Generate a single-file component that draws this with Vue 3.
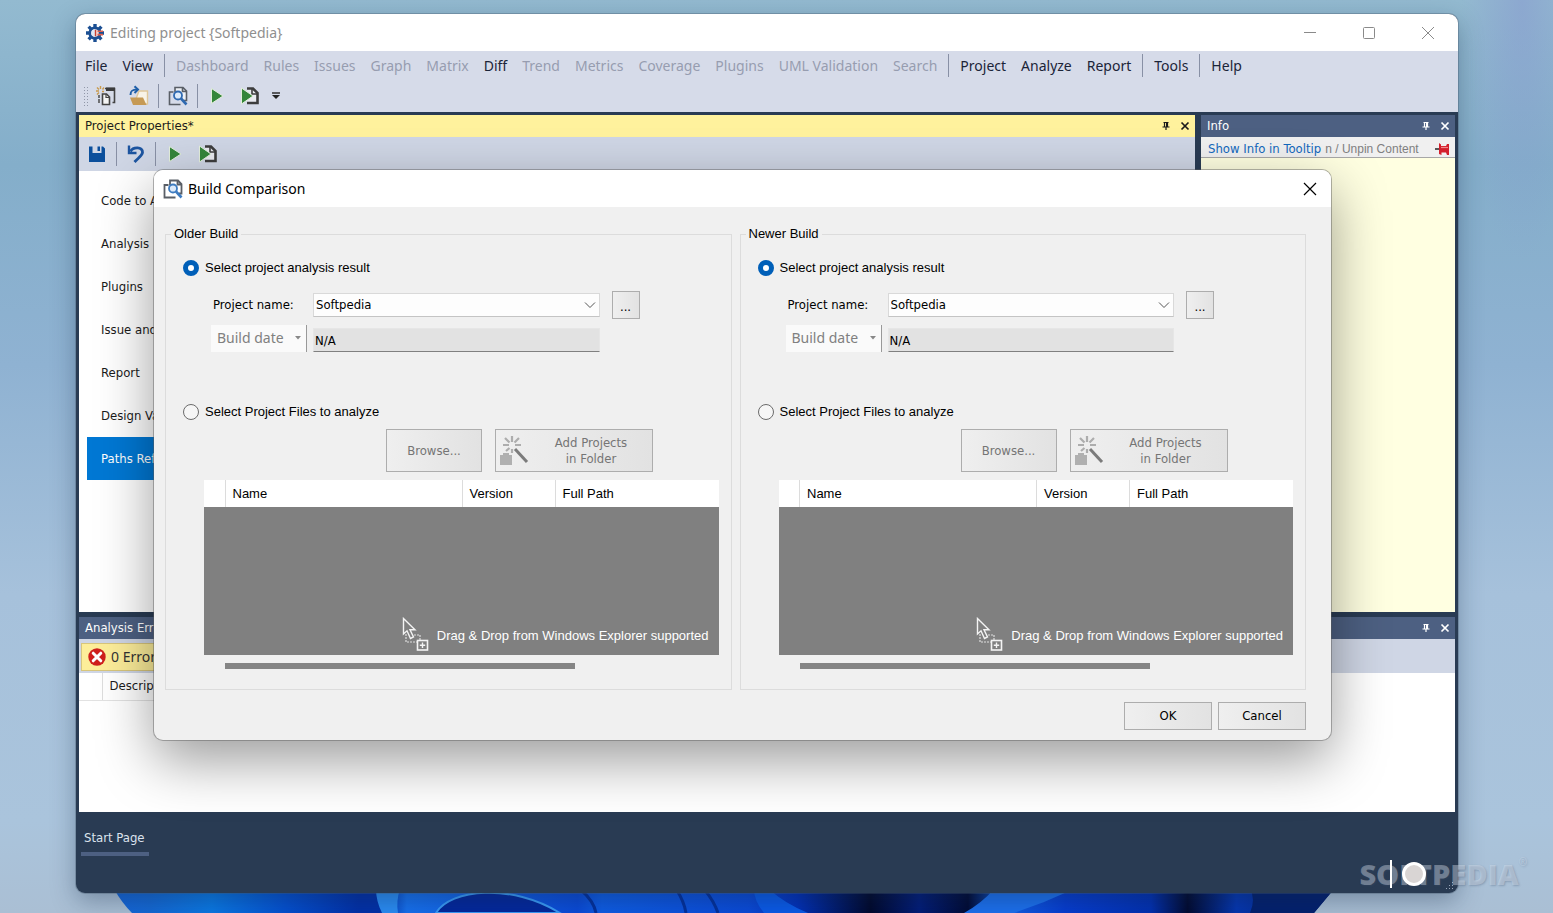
<script setup>
import { ref } from 'vue'

const menuGroups = [
  [{ t: 'File', on: true }, { t: 'View', on: true }],
  [
    { t: 'Dashboard' }, { t: 'Rules' }, { t: 'Issues' }, { t: 'Graph' }, { t: 'Matrix' },
    { t: 'Diff', on: true }, { t: 'Trend' }, { t: 'Metrics' }, { t: 'Coverage' },
    { t: 'Plugins' }, { t: 'UML Validation' }, { t: 'Search' }
  ],
  [{ t: 'Project', on: true }, { t: 'Analyze', on: true }, { t: 'Report', on: true }],
  [{ t: 'Tools', on: true }],
  [{ t: 'Help', on: true }]
]

const sections = ['Code to Analyze', 'Analysis', 'Plugins', 'Issue and Debt', 'Report', 'Design Validation', 'Paths Referenced']
const current = ref('Paths Referenced')

const builds = ref([
  { id: 'older', title: 'Older Build', source: 'result', project: 'Softpedia', date: 'N/A' },
  { id: 'newer', title: 'Newer Build', source: 'result', project: 'Softpedia', date: 'N/A' }
])
</script>

<template>
  <div class="desktop">
    <svg class="bloom" viewBox="0 0 1240 24" preserveAspectRatio="none" aria-hidden="true">
      <defs>
        <linearGradient id="bloomFill" x1="0" x2="1" y1="0" y2="0">
          <stop offset="0" stop-color="#1565d8" />
          <stop offset=".03" stop-color="#1468d4" />
          <stop offset=".08" stop-color="#0a78e4" />
          <stop offset=".14" stop-color="#0450d0" />
          <stop offset=".2" stop-color="#0230a8" />
          <stop offset=".22" stop-color="#0230a8" />
          <stop offset=".24" stop-color="#1670ee" />
          <stop offset=".38" stop-color="#0a4ad8" />
          <stop offset=".4" stop-color="#0e5ce4" />
          <stop offset=".52" stop-color="#0a4ad8" />
          <stop offset=".56" stop-color="#0230b8" />
          <stop offset=".62" stop-color="#01082c" />
          <stop offset=".66" stop-color="#021c78" />
          <stop offset=".7" stop-color="#010a34" />
          <stop offset=".73" stop-color="#1260e4" />
          <stop offset=".78" stop-color="#063cd0" />
          <stop offset=".85" stop-color="#0230b0" />
          <stop offset=".88" stop-color="#020a30" />
          <stop offset=".92" stop-color="#0536b0" />
          <stop offset="1" stop-color="#03206e" />
        </linearGradient>
      </defs>
      <path d="M0 0H1220Q1210 12 1200 24H18Q8 14 0 0Z" fill="url(#bloomFill)" />
      <path d="M262 0H286Q282 12 284 24H268Q262 12 262 0Z" fill="#2a8cf4" />
      <path d="M322 24C336 0 398 -6 446 24Z" fill="#03279c" stroke="#3a9cf8" stroke-width="2" />
      <path d="M466 0Q480 12 482 24M562 0Q570 12 572 24M590 0Q600 12 604 24" fill="none" stroke="#03309c" stroke-width="3" />
      <path d="M655 0Q670 14 694 24H650Q640 12 640 0Z" fill="#0a5ae8" />
      <path d="M880 0H960Q930 14 900 24H850Q868 14 880 0Z" fill="#1c70ee" />
      <path d="M1136 0H1220Q1210 12 1200 24H1136Q1142 10 1136 0Z" fill="#03206e" />
    </svg>

    <main class="window">
      <header class="titlebar">
        <svg class="app-icon" viewBox="0 0 20 20" aria-hidden="true">
          <g stroke="#1b4f93" stroke-width="3.4">
            <path d="M10 1V19M1 10H19M3.6 3.6L16.4 16.4M16.4 3.6L3.6 16.4" />
          </g>
          <circle cx="10" cy="10" r="6.6" fill="#1b4f93" />
          <circle cx="10" cy="10" r="3.8" fill="#f3d9d6" />
          <path d="M10 6.2A3.8 3.8 0 0 0 10 13.8Z" fill="#dfe8f4" />
          <path d="M10.5 7V13" stroke="#c8402f" stroke-width="1.4" />
          <path d="M12.5 8.2H18M12.5 11.6H18" stroke="#e0604c" stroke-width="1.6" />
        </svg>
        <h1>Editing project {Softpedia}</h1>
        <div class="caption">
          <button type="button" aria-label="Minimize"><svg viewBox="0 0 14 14"><path d="M1 6.5H13" /></svg></button>
          <button type="button" aria-label="Maximize"><svg viewBox="0 0 14 14"><rect x="1.5" y="1.5" width="11" height="11" rx="1" /></svg></button>
          <button type="button" aria-label="Close"><svg viewBox="0 0 14 14"><path d="M1 1L13 13M13 1L1 13" /></svg></button>
        </div>
      </header>

      <nav class="menubar" aria-label="Main menu">
        <div v-for="(group, g) in menuGroups" :key="g" class="menu-group">
          <button v-for="item in group" :key="item.t" type="button" :disabled="!item.on">{{ item.t }}</button>
        </div>
      </nav>

      <div class="toolbar" role="toolbar" aria-label="Project tools">
        <i class="grip"></i>
        <button type="button" aria-label="New project">
          <svg viewBox="0 0 22 22">
            <path d="M10 3.5H19.5V17.5H17.5" fill="none" stroke="#444" stroke-width="1.6" />
            <path d="M11 2.5H20V6H11Z" fill="#3c3c3c" />
            <path d="M7.5 9H11.5L14.5 12V19.5H7.5Z" fill="#f4f4f4" stroke="#444" stroke-width="1.6" />
            <path d="M11 9V12.5H14.5" fill="none" stroke="#444" stroke-width="1.2" />
            <path d="M4 18V10" stroke="#555" stroke-width="1.6" stroke-dasharray="4 1" />
            <path d="M5.5 1V4M1 6H4M2 2.5L4 4.5M9 2.5L7.5 4.5M2 9.5L4 7.5M7 6.5H9" stroke="#c99a4e" stroke-width="1.4" />
          </svg>
        </button>
        <button type="button" aria-label="Open project">
          <svg viewBox="0 0 22 22">
            <path d="M11 6H19.5V19H6Z" fill="#f8f3e8" stroke="#dfc79b" stroke-width="1.4" />
            <path d="M2 12.5H15L18.5 20H5Z" fill="#c69a55" />
            <path d="M2.5 10C2.5 5.5 4.5 4.5 9 4.5" fill="none" stroke="#1f5fa8" stroke-width="2" />
            <path d="M6.5 1.2L10 4.5L6.5 8" fill="none" stroke="#1f5fa8" stroke-width="2" />
          </svg>
        </button>
        <i class="sep"></i>
        <button type="button" aria-label="Compare builds">
          <svg viewBox="0 0 22 22">
            <path d="M8 7V2.5H16L19.5 6V15.5H17M15.5 3V6.5H19" fill="#eef1f6" stroke="#595e66" stroke-width="1.6" />
            <path d="M6.5 7H2.5V19.5H13.5" fill="none" stroke="#595e66" stroke-width="1.6" />
            <circle cx="11" cy="10.5" r="4" fill="#dceafa" stroke="#2f69b0" stroke-width="1.8" />
            <path d="M14 13.5L19.5 19.5" stroke="#2f69b0" stroke-width="2.6" />
          </svg>
        </button>
        <i class="sep"></i>
        <button type="button" aria-label="Run analysis">
          <svg viewBox="0 0 22 22"><path d="M5.5 3.5L17 11L5.5 18.5Z" fill="#35863a" stroke="#e4efdc" /></svg>
        </button>
        <button type="button" aria-label="Run analysis and build report">
          <svg viewBox="0 0 22 22">
            <path d="M8 3.5H14L18.5 8V18H8" fill="#e9eaf0" stroke="#3d3d3d" stroke-width="2.6" />
            <path d="M13 4V9H18" fill="none" stroke="#3d3d3d" stroke-width="1.6" />
            <path d="M2.5 3L14 11L2.5 19Z" fill="#35863a" stroke="#e4efdc" />
          </svg>
        </button>
        <button type="button" class="more" aria-label="Toolbar options">
          <svg viewBox="0 0 8 8"><path d="M0 1H8" stroke="#222" stroke-width="1.4" /><path d="M0 3H8L4 7Z" fill="#222" /></svg>
        </button>
      </div>

      <div class="workspace">
        <div class="docks">
          <section class="pane properties">
            <header class="pane-head active">
              <h2>Project Properties*</h2>
              <button type="button" aria-label="Pin"><svg viewBox="0 0 10 10"><path d="M2.5 1.5H7.5M3.5 1V6M6.5 1V6M1.5 6H8.5M5 6V9" stroke="currentColor" stroke-width="1.2" /><path d="M5 1H7V6H5Z" fill="currentColor" /></svg></button>
              <button type="button" aria-label="Close pane"><svg viewBox="0 0 10 10"><path d="M1.5 1.5L8.5 8.5M8.5 1.5L1.5 8.5" stroke="currentColor" stroke-width="1.7" /></svg></button>
            </header>
            <div class="pane-tools" role="toolbar" aria-label="Properties tools">
              <button type="button" aria-label="Save">
                <svg viewBox="0 0 22 22"><path d="M3 3.5H6.5V10H15.5V3.5H17L19 5.5V19H3Z" fill="#0b4f9c" /><path d="M11.5 3.5H14V8H11.5Z" fill="#0b4f9c" /></svg>
              </button>
              <i class="sep"></i>
              <button type="button" aria-label="Undo">
                <svg viewBox="0 0 22 22"><path d="M5.5 8.5C8 3.5 18 3.5 17.5 9.5C17 13 13 15 9.5 19" fill="none" stroke="#1d55a0" stroke-width="2.8" /><path d="M4 2.5V10H11.5" fill="none" stroke="#1d55a0" stroke-width="2.4" /></svg>
              </button>
              <i class="sep"></i>
              <button type="button" aria-label="Run analysis">
                <svg viewBox="0 0 22 22"><path d="M5.5 3.5L17 11L5.5 18.5Z" fill="#35863a" stroke="#e4efdc" /></svg>
              </button>
              <button type="button" aria-label="Run analysis and build report">
                <svg viewBox="0 0 22 22">
                  <path d="M8 3.5H14L18.5 8V18H8" fill="#e9eaf0" stroke="#3d3d3d" stroke-width="2.6" />
                  <path d="M13 4V9H18" fill="none" stroke="#3d3d3d" stroke-width="1.6" />
                  <path d="M2.5 3L14 11L2.5 19Z" fill="#35863a" stroke="#e4efdc" />
                </svg>
              </button>
            </div>
            <nav class="sections" aria-label="Property sections">
              <button v-for="s in sections" :key="s" type="button" :class="{ selected: s === current }" @click="current = s">{{ s }}</button>
            </nav>
          </section>

          <aside class="pane info">
            <header class="pane-head">
              <h2>Info</h2>
              <button type="button" aria-label="Pin"><svg viewBox="0 0 10 10"><path d="M2.5 1.5H7.5M3.5 1V6M6.5 1V6M1.5 6H8.5M5 6V9" stroke="currentColor" stroke-width="1.2" /><path d="M5 1H7V6H5Z" fill="currentColor" /></svg></button>
              <button type="button" aria-label="Close pane"><svg viewBox="0 0 10 10"><path d="M1.5 1.5L8.5 8.5M8.5 1.5L1.5 8.5" stroke="currentColor" stroke-width="1.7" /></svg></button>
            </header>
            <div class="info-bar">
              <a href="#">Show Info in Tooltip</a>
              <span>n / Unpin Content</span>
              <svg viewBox="0 0 16 14" aria-hidden="true">
                <path d="M1 7H6" stroke="#333" stroke-width="1.6" />
                <path d="M5 1L7 2.5V4H12L13 2H15V13H13L12 10.5H7.5V13L5 12Z" fill="#d3202c" />
                <path d="M7 5.5H14" stroke="#f08a8c" stroke-width="1.2" />
              </svg>
            </div>
          </aside>
        </div>

        <section class="pane errors">
          <header class="pane-head">
            <h2>Analysis Errors</h2>
            <button type="button" aria-label="Pin"><svg viewBox="0 0 10 10"><path d="M2.5 1.5H7.5M3.5 1V6M6.5 1V6M1.5 6H8.5M5 6V9" stroke="currentColor" stroke-width="1.2" /><path d="M5 1H7V6H5Z" fill="currentColor" /></svg></button>
            <button type="button" aria-label="Close pane"><svg viewBox="0 0 10 10"><path d="M1.5 1.5L8.5 8.5M8.5 1.5L1.5 8.5" stroke="currentColor" stroke-width="1.7" /></svg></button>
          </header>
          <div class="error-bar">
            <button type="button">
              <svg viewBox="0 0 18 18" aria-hidden="true"><circle cx="9" cy="9" r="8.7" fill="#cf1f1c" /><path d="M5.2 5.2L12.8 12.8M12.8 5.2L5.2 12.8" stroke="#fff" stroke-width="3" stroke-linecap="round" /></svg>
              <span>0 Errors</span>
            </button>
          </div>
          <table class="error-table">
            <thead><tr><th class="mark"></th><th>Description</th></tr></thead>
          </table>
        </section>
      </div>

      <footer class="statusbar">
        <button type="button" class="tab">Start Page</button>
        <i class="size-grip"></i>
      </footer>

      <div class="dialog" role="dialog" aria-labelledby="dialog-title">
        <header class="dialog-head">
          <svg viewBox="0 0 22 22" aria-hidden="true">
            <path d="M8 7V2.5H16L19.5 6V15.5H17M15.5 3V6.5H19" fill="none" stroke="#595e66" stroke-width="1.8" />
            <path d="M6.5 7H2.5V19.5H13.5" fill="none" stroke="#595e66" stroke-width="1.8" />
            <circle cx="11" cy="10.5" r="4" fill="#dceafa" stroke="#3d7bc0" stroke-width="1.8" />
            <path d="M14 13.5L19.5 19.5" stroke="#3d7bc0" stroke-width="2.6" />
          </svg>
          <h2 id="dialog-title">Build Comparison</h2>
          <button type="button" aria-label="Close dialog"><svg viewBox="0 0 14 14"><path d="M1 1L13 13M13 1L1 13" /></svg></button>
        </header>

        <form class="dialog-body" @submit.prevent>
          <div class="builds">
            <fieldset v-for="b in builds" :key="b.id">
              <legend>{{ b.title }}</legend>
              <label class="choice">
                <input v-model="b.source" type="radio" value="result" :name="b.id" />
                Select project analysis result
              </label>
              <div class="fields">
                <label :for="b.id + '-project'">Project name:</label>
                <div class="combo">
                  <select :id="b.id + '-project'" v-model="b.project"><option>Softpedia</option></select>
                  <svg viewBox="0 0 12 8" aria-hidden="true"><path d="M1 1.5L6 6.5L11 1.5" /></svg>
                </div>
                <button type="button" class="btn dots" aria-label="Choose project">...</button>
                <button type="button" class="date-mode" disabled>
                  Build date
                  <svg viewBox="0 0 6 4" aria-hidden="true"><path d="M0 0H6L3 3.5Z" fill="#888" /></svg>
                </button>
                <input v-model="b.date" class="date" type="text" readonly aria-label="Build date" />
              </div>
              <label class="choice second">
                <input v-model="b.source" type="radio" value="files" :name="b.id" />
                Select Project Files to analyze
              </label>
              <div class="file-actions">
                <button type="button" class="btn browse" disabled>Browse...</button>
                <button type="button" class="btn add" disabled>
                  <svg viewBox="0 0 30 30" aria-hidden="true">
                    <path d="M12 0V6M12 13V17M3 9H9M15 9H21M5 2L9.5 6.5M19 2L14.5 6.5M6 15L9.5 12" stroke="#adadad" stroke-width="2.2" />
                    <path d="M15 13L27 26" stroke="#7b7b7b" stroke-width="3" />
                    <path d="M0 19H3V17H9V19H12V29H0Z" fill="#b0b0b0" />
                  </svg>
                  <span>Add Projects<br />in Folder</span>
                </button>
              </div>
              <table class="files">
                <thead>
                  <tr><th class="mark"></th><th class="name">Name</th><th class="version">Version</th><th>Full Path</th></tr>
                </thead>
                <tbody>
                  <tr>
                    <td colspan="4">
                      <div class="drop">
                        <svg viewBox="0 0 28 34" aria-hidden="true">
                          <path d="M1.5 1.5V17L5 13.8L8.5 21.5L11.5 20L8 12.8H13Z" fill="#808080" stroke="#f4f4f4" stroke-width="1.4" />
                          <path d="M4 17V25H15M12 18H18V23" fill="none" stroke="#ddd" stroke-width="1.2" stroke-dasharray="2 1" />
                          <rect x="15.5" y="23.5" width="10" height="9.5" fill="#808080" stroke="#f4f4f4" stroke-width="1.6" />
                          <path d="M20.5 25.5V31M17.8 28.2H23.2" stroke="#f4f4f4" stroke-width="1.4" />
                        </svg>
                        <span>Drag &amp; Drop from Windows Explorer supported</span>
                      </div>
                    </td>
                  </tr>
                </tbody>
              </table>
              <div class="scroll"><i></i></div>
            </fieldset>
          </div>
          <div class="dialog-actions">
            <button type="submit" class="btn">OK</button>
            <button type="button" class="btn">Cancel</button>
          </div>
        </form>
      </div>
    </main>

    <div class="watermark">SOFTPEDIA<sup>®</sup></div>
    <div class="slider" aria-hidden="true"><i></i><b></b></div>
  </div>
</template>

<style>
html, body { margin: 0; }
</style>

<style scoped>
* { box-sizing: border-box; }
button, input, select { font: inherit; color: inherit; margin: 0; padding: 0; border: 0; background: none; border-radius: 0; }
h1, h2 { margin: 0; font: inherit; }
svg { display: block; flex: none; }

.desktop {
  position: relative;
  height: 100vh;
  min-height: 880px;
  padding: 14px 95px 20px 76px;
  overflow: hidden;
  display: flex;
  color: #1b1b1b;
  font: 13px/16px "DejaVu Sans Condensed", "DejaVu Sans", sans-serif;
  background:
    radial-gradient(60px 260px at 98% 0, rgba(134, 150, 208, .5), transparent),
    linear-gradient(180deg, #93bad0 0%, #84aeca 18%, #8fb2d2 40%, #a6c1db 65%, #aac4dc 90%, #aabfd4 100%);
}
.bloom { position: absolute; left: 114px; right: 199px; bottom: 0; height: 24px; width: calc(100% - 313px); }

.window {
  position: relative;
  flex: 1;
  display: flex;
  flex-direction: column;
  border-radius: 9px;
  background: #293b53;
  box-shadow: 0 0 0 1px rgba(70, 90, 110, .35), 0 8px 24px rgba(20, 40, 70, .35);
}

.titlebar { display: flex; align-items: center; height: 37px; padding-left: 9px; background: #fff; border-radius: 9px 9px 0 0; }
.app-icon { width: 20px; height: 20px; }
.titlebar h1 { flex: 1; margin-left: 5px; font: 14px/20px "Noto Sans", "Open Sans", sans-serif; color: #8f8f8f; }
.caption { display: flex; gap: 14px; padding-right: 8px; }
.caption button { width: 45px; height: 30px; display: grid; place-items: center; }
.caption svg { width: 14px; height: 14px; fill: none; stroke: #8a8a8a; }

.menubar { display: flex; height: 29px; padding: 3px 9px; background: #d6dbe9; font: 14px/23px "Noto Sans", "Open Sans", sans-serif; }
.menu-group { display: flex; gap: 15px; }
.menu-group + .menu-group { margin-left: 11px; padding-left: 11px; border-left: 1px solid #8890a5; }
.menubar button { color: #1b2438; white-space: nowrap; }
.menubar button:disabled { color: #979db0; }

.toolbar { display: flex; align-items: center; height: 32px; padding-left: 7px; background: #d6dbe9; }
.toolbar button { width: 22px; height: 22px; }
.toolbar svg, .pane-tools svg { width: 22px; height: 22px; }
.grip { width: 5px; height: 20px; margin-right: 7px; background: radial-gradient(circle, #9097a8 0 1px, transparent 1px) 0 0 / 3px 3px; }
.toolbar button + button { margin-left: 11px; }
.sep { width: 1px; height: 24px; margin: 0 8px; background: #8890a5; }
.toolbar .more { width: 8px; height: 8px; }
.toolbar .more svg { width: 8px; height: 8px; }

.workspace { flex: 1; display: flex; flex-direction: column; gap: 5px; padding: 3px 3px 0; min-height: 0; }
.docks { flex: 1; display: flex; gap: 6px; min-height: 0; }
.pane { display: flex; flex-direction: column; background: #fff; }
.properties { flex: 1; min-width: 0; }
.info { flex: 0 0 254px; background: #ffffe1; }
.errors { flex: 0 0 195px; }
.pane-head { display: flex; align-items: center; gap: 9px; height: 22px; padding: 0 5px 0 6px; background: #4d6082; color: #fff; }
.pane-head.active { background: #fff29d; color: #1b1b1b; }
.pane-head h2 { flex: 1; }
.pane-head button { width: 10px; height: 10px; }
.pane-head svg { width: 10px; height: 10px; fill: none; }
.pane-tools { display: flex; align-items: center; height: 34px; padding-left: 7px; background: #cfd6e5; }
.pane-tools button + button { margin-left: 11px; }

.sections { display: flex; flex-direction: column; width: 200px; padding: 8px 0 0 8px; }
.sections button { height: 43px; padding-left: 14px; text-align: left; }
.sections button.selected { background: #0078d4; color: #fff; }

.info-bar { display: flex; align-items: center; gap: 4px; height: 21px; padding: 3px 5px 0 7px; border-bottom: 1px solid #a7a7a7; background: #f0f0f0; white-space: nowrap; }
.info-bar a { color: #1368bd; text-decoration: none; }
.info-bar span { flex: 1; color: #808080; font: 12px/16px "Liberation Sans", Arial, sans-serif; }
.info-bar svg { width: 16px; height: 14px; }

.error-bar { height: 34px; padding: 4px 2px 2px; background: #cfd6e5; }
.error-bar button { display: flex; align-items: center; gap: 5px; width: 110px; height: 28px; padding-left: 6px; background: #fdee9a; border: 1px solid #d8c67c; font: 14px/20px "Noto Sans", "Open Sans", sans-serif; color: #333; }
.error-bar svg { width: 18px; height: 18px; }
.error-table { width: 300px; border-collapse: collapse; }
.error-table th { height: 27px; padding: 0 7px; border-bottom: 1px solid #e2e2e2; font-weight: normal; text-align: left; }
.error-table .mark { width: 23px; border-right: 1px solid #ddd; }

.statusbar { display: flex; align-items: flex-start; justify-content: space-between; height: 81px; padding: 17px 5px 4px; }
.tab { height: 27px; padding: 0 4px 6px 3px; border-bottom: 4px solid #4d6082; color: #dce3ee; }
.size-grip { align-self: flex-end; width: 8px; height: 8px; background: radial-gradient(circle, #9aa7ba 0 1px, transparent 1px) 0 0 / 3px 3px; clip-path: polygon(100% 0, 100% 100%, 0 100%); }

.dialog {
  position: absolute;
  top: 156px;
  left: 78px;
  right: 127px;
  border-radius: 9px;
  background: #f0f0f0;
  color: #000;
  box-shadow: 0 0 0 1px rgba(90, 90, 90, .45), 0 20px 56px rgba(0, 0, 0, .4);
}
.dialog-head { display: flex; align-items: center; height: 37px; padding: 0 14px 0 8px; background: #fff; border-radius: 9px 9px 0 0; }
.dialog-head > svg { width: 22px; height: 22px; }
.dialog-head h2 { flex: 1; margin-left: 4px; font: 14px/20px "Noto Sans", "Open Sans", sans-serif; }
.dialog-head button svg { width: 14px; height: 14px; fill: none; stroke: #000; stroke-width: 1.2; }

.dialog-body { padding: 19px 25px 10px 11px; font: 13px/16px "Liberation Sans", Arial, sans-serif; }
.builds { display: grid; grid-template-columns: 1fr 1fr; gap: 8px; }
fieldset { min-width: 0; margin: 0; padding: 0 12px 20px 17px; border: 1px solid #dcdcdc; }
legend { margin-left: -12px; padding: 0 3px; }
.choice { display: flex; align-items: center; gap: 6px; height: 20px; margin-top: 16px; }
.choice.second { margin-top: 50px; }
.choice input { appearance: none; width: 16px; height: 16px; border: 1px solid #6b6b6b; border-radius: 50%; background: #f6f6f6; }
.choice input:checked { border: 5px solid #005fb8; background: #fff; }

.fields { display: grid; grid-template-columns: 96px 1fr 28px; column-gap: 6px; row-gap: 6px; align-items: center; margin: 13px 79px 0 28px; font: 13px/16px "DejaVu Sans Condensed", "DejaVu Sans", sans-serif; }
.fields > label { padding-left: 2px; }
.combo { position: relative; margin-right: 6px; }
.combo select { appearance: none; width: 100%; height: 24px; padding-left: 2px; background: #fdfdfd; border: 1px solid #d9d9d9; border-bottom-color: #c4c4c4; }
.combo svg { position: absolute; right: 4px; top: 8px; width: 12px; height: 8px; fill: none; stroke: #555; pointer-events: none; }
.btn { border: 1px solid #adadad; background: linear-gradient(90deg, #efefef, #e2e2e2); text-align: center; font: 13px/16px "DejaVu Sans Condensed", "DejaVu Sans", sans-serif; }
.btn:disabled { color: #757575; }
.dots { height: 28px; padding-top: 3px; }
.date-mode { display: flex; align-items: center; justify-content: space-between; height: 27px; padding: 0 5px 2px 6px; background: #fafafa; border-right: 1px solid #999; font: 14px/20px "Noto Sans", "Open Sans", sans-serif; white-space: nowrap; }
.date-mode:disabled { color: #808080; }
.date-mode svg { width: 6px; height: 4px; }
.date { align-self: end; height: 24px; margin-right: 6px; padding-left: 1px; min-width: 0; background: #e2e2e2; border: 1px solid #e6e6e6; border-bottom-color: #808080; }

.file-actions { display: flex; gap: 13px; margin: 7px 0 0 203px; }
.file-actions .btn { height: 43px; }
.browse { width: 96px; }
.add { display: flex; align-items: center; width: 158px; padding-left: 4px; }
.add svg { width: 30px; height: 30px; }
.add span { flex: 1; }

.files { table-layout: fixed; width: calc(100% - 21px); margin: 8px 0 0 21px; border-collapse: collapse; background: #fff; }
.files th { height: 27px; padding: 0 7px; font-weight: normal; text-align: left; }
.files th + th { border-left: 1px solid #dcdcdc; }
.files .mark { width: 21px; }
.files .name { width: 237px; }
.files .version { width: 93px; }
.files td { height: 148px; padding: 0 10px 4px; background: #808080; vertical-align: bottom; color: #fff; }
.drop { display: flex; justify-content: flex-end; gap: 7px; }
.drop svg { width: 28px; height: 34px; }
.drop span { padding-top: 11px; }
.scroll { margin: 8px 0 0 42px; }
.scroll i { display: block; width: 71%; height: 6px; background: #858585; }

.dialog-actions { display: flex; justify-content: flex-end; gap: 6px; padding-top: 12px; }
.dialog-actions .btn { width: 88px; height: 28px; }

.watermark { position: absolute; right: 26px; bottom: 22px; display: flex; font: 900 29px/34px "Open Sans", Lato, sans-serif; color: rgba(225, 232, 242, .38); text-shadow: 1px 1px 2px rgba(60, 80, 110, .3); }
.watermark sup { font: 10px/10px "Open Sans", sans-serif; }
.slider { position: absolute; right: 127px; bottom: 25px; display: flex; align-items: center; gap: 10px; }
.slider i { width: 2px; height: 28px; background: #fff; }
.slider b { width: 24px; height: 24px; border: 3px solid #fff; border-radius: 50%; background: #d9d5d4; }
</style>
